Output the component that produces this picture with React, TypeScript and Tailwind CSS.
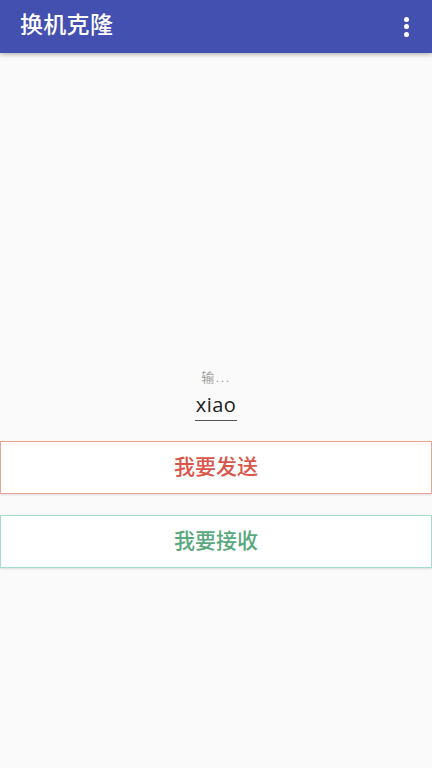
import { useState } from 'react';

function App() {
  const [name, setName] = useState('xiao');

  return (
    <div
      className="min-h-[768px] bg-[#fafafa] flex flex-col"
      style={{ fontFamily: 'Roboto, "Noto Sans CJK SC", sans-serif' }}
    >
      {/* Toolbar */}
      <div className="h-[53px] bg-[#4350b0] flex items-center justify-between pl-[20px] pr-[16px] shadow-[0_2px_4px_rgba(0,0,0,0.25)]">
        <h1 className="text-white text-[23px] font-medium tracking-[0.3px]">换机克隆</h1>
        <button className="flex flex-col items-center gap-[2.5px] w-[20px]">
          <span className="w-[5px] h-[5px] rounded-full bg-white" />
          <span className="w-[5px] h-[5px] rounded-full bg-white" />
          <span className="w-[5px] h-[5px] rounded-full bg-white" />
        </button>
      </div>

      {/* Content */}
      <div className="flex flex-col items-center pt-[316px]">
        <span className="text-[13px] text-[#9e9e9e] leading-[18px] tracking-[1.5px]">输...</span>
        <input
          value={name}
          onChange={(e) => setName(e.target.value)}
          className="mt-[5px] w-[42px] text-center text-[20px] text-[#212121] leading-[26px] tracking-[0.5px] bg-transparent border-b border-[#555] focus:outline-none pb-[2px]"
          style={{ fontFamily: '"Open Sans", Roboto, sans-serif' }}
        />
        <button className="mt-[20px] w-full h-[53px] bg-white border border-[#eba394] text-[#d9564a] text-[21px] font-medium shadow-[0_1px_2px_rgba(0,0,0,0.12)]">
          我要发送
        </button>
        <button className="mt-[21px] w-full h-[53px] bg-white border border-[#a6dcc6] text-[#5aa87d] text-[21px] font-medium shadow-[0_1px_2px_rgba(0,0,0,0.12)]">
          我要接收
        </button>
      </div>
    </div>
  );
}

export default App;
